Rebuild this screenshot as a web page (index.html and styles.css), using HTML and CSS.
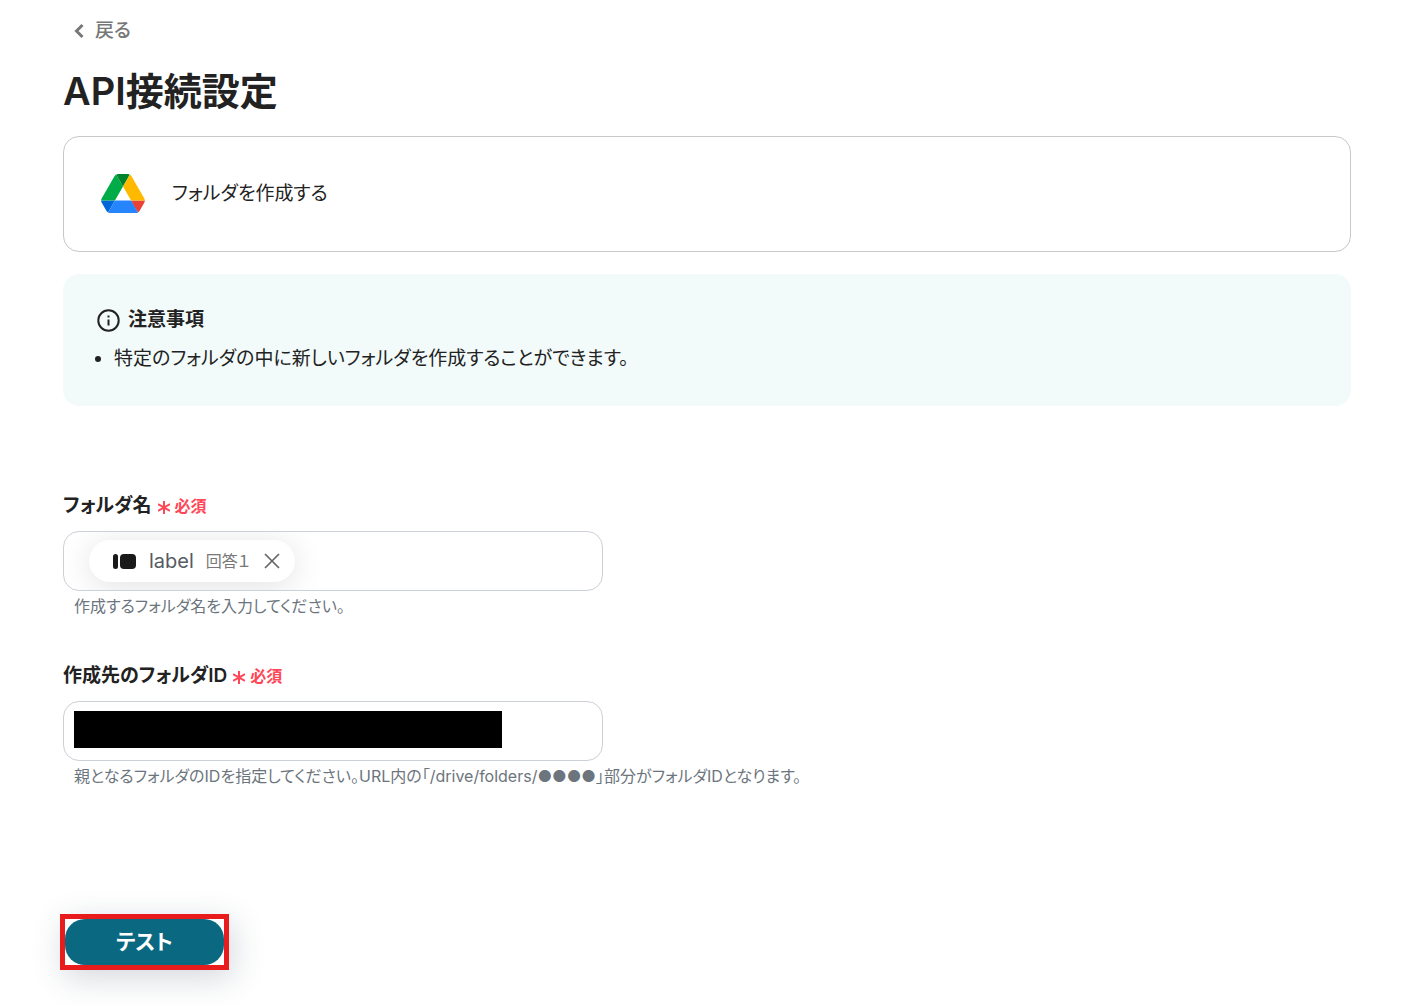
FILE: index.html
```html
<!DOCTYPE html>
<html lang="ja">
<head>
  <meta charset="UTF-8">
  <title>API接続設定</title>
  <meta name="viewport" content="width=device-width, initial-scale=1">
  <link rel="stylesheet" href="styles.css">
</head>
<body>
  <main>
    <a class="back" href="#">
      <svg width="12" height="16" viewBox="0 0 12 16" fill="none" stroke="currentColor" stroke-width="3"><path d="M9.5 2 3.5 8l6 6"/></svg>
      戻る
    </a>
    <h1>API接続設定</h1>

    <section class="action-card">
      <svg width="44" height="40" viewBox="0 0 87.3 80">
        <path fill="#0066da" d="m6.6 66.85 3.85 6.65c.8 1.4 1.95 2.5 3.3 3.3l13.75-23.8h-27.5c0 1.55.4 3.1 1.2 4.5z"/>
        <path fill="#00ac47" d="m43.65 25-13.75-23.8c-1.35.8-2.5 1.9-3.3 3.3l-25.4 44a9.06 9.06 0 0 0 -1.2 4.5h27.5z"/>
        <path fill="#ea4335" d="m73.55 76.8c1.35-.8 2.5-1.9 3.3-3.3l1.6-2.75 7.65-13.25c.8-1.4 1.2-2.95 1.2-4.5h-27.502l5.852 11.5z"/>
        <path fill="#00832d" d="m43.65 25 13.75-23.8c-1.35-.8-2.9-1.2-4.5-1.2h-18.5c-1.6 0-3.15.45-4.5 1.2z"/>
        <path fill="#2684fc" d="m59.8 53h-32.3l-13.75 23.8c1.35.8 2.9 1.2 4.5 1.2h50.8c1.6 0 3.15-.45 4.5-1.2z"/>
        <path fill="#ffba00" d="m73.4 26.5-12.7-22c-.8-1.4-1.95-2.5-3.3-3.3l-13.75 23.8 16.15 28h27.45c0-1.55-.4-3.1-1.2-4.5z"/>
      </svg>
      <p>フォルダを作成する</p>
    </section>

    <section class="notice">
      <h2>
        <svg width="24" height="24" viewBox="0 0 24 24" fill="none" stroke="currentColor" stroke-width="2"><circle cx="12.5" cy="12.5" r="10.2"/><path d="M12.5 11.5v6M12.5 7.5v2"/></svg>
        注意事項
      </h2>
      <ul>
        <li>特定のフォルダの中に新しいフォルダを作成することができます。</li>
      </ul>
    </section>

    <form class="settings">
      <div class="field">
        <label for="folderName">フォルダ名
          <span class="required"><svg width="12" height="16" viewBox="0 0 12 16" stroke="currentColor" stroke-width="2"><path d="M6 3v13M0 6.2l12 6.6M12 6.2 0 12.8"/></svg>必須</span>
        </label>
        <div class="input-box">
          <div class="tag">
            <svg width="24" height="16" viewBox="0 0 24 16" fill="#1a1a1a"><rect x="0" y="1" width="5" height="15" rx="2.5"/><rect x="7" y="1" width="16" height="15" rx="4"/></svg>
            <span class="tag-name">label</span>
            <span class="tag-value">回答１</span>
            <button type="button" aria-label="削除"><svg width="16" height="16" viewBox="0 0 16 16" fill="none" stroke="currentColor" stroke-width="1.7"><path d="M1 1l14 14M15 1 1 15"/></svg></button>
          </div>
          <input type="text" id="folderName">
        </div>
        <p class="help">作成するフォルダ名を入力してください。</p>
      </div>

      <div class="field">
        <label for="folderId">作成先のフォルダID
          <span class="required"><svg width="12" height="16" viewBox="0 0 12 16" stroke="currentColor" stroke-width="2"><path d="M6 3v13M0 6.2l12 6.6M12 6.2 0 12.8"/></svg>必須</span>
        </label>
        <div class="input-box">
          <input type="text" id="folderId">
          <span class="mask"></span>
        </div>
        <p class="help">親となるフォルダのIDを指定してください。URL内の「/drive/folders/●●●●」部分がフォルダIDとなります。</p>
      </div>

      <div class="highlight">
        <button type="submit" class="test-button">テスト</button>
      </div>
    </form>
  </main>
</body>
</html>
```

FILE: styles.css
```css
* {
  box-sizing: border-box;
}
body {
  margin: 0;
  background: #fff;
  color: #222;
  font-family: Inter, "Noto Sans CJK JP", sans-serif;
  font-size: 19px;
  line-height: 28px;
  font-feature-settings: "palt";
}
h1, h2, p, ul {
  margin: 0;
}
button, input {
  font: inherit;
  font-feature-settings: inherit;
}
main {
  padding: 17px 69px 36px 63px;
}
.back {
  display: flex;
  align-items: center;
  gap: 10px;
  width: fit-content;
  margin-left: 10px;
  color: #777;
  font-weight: 500;
  text-decoration: none;
}
h1 {
  margin-top: 18px;
  font-size: 38px;
  line-height: 56px;
  font-weight: 600;
}
.action-card {
  display: flex;
  align-items: center;
  gap: 27px;
  margin-top: 17px;
  padding: 43px 37px;
  border: 1px solid #c8c8c8;
  border-radius: 16px;
}
.action-card svg {
  margin: -6px 0;
}
.notice {
  margin-top: 22px;
  padding: 32px 33px 33px;
  border-radius: 16px;
  background: #f2fbfa;
}
.notice h2 {
  display: flex;
  align-items: center;
  gap: 8px;
  font-size: 19px;
  font-weight: 600;
}
.notice ul {
  margin-top: 11px;
  padding-left: 18px;
}
.settings {
  display: flex;
  flex-direction: column;
  gap: 42px;
  margin-top: 86px;
}
.field label {
  display: flex;
  align-items: center;
  gap: 6px;
  font-weight: 600;
}
.required {
  display: flex;
  align-items: center;
  gap: 5px;
  color: #ff4757;
  font-size: 16px;
}
.input-box {
  position: relative;
  display: flex;
  align-items: center;
  max-width: 540px;
  height: 60px;
  margin-top: 11px;
  padding: 0 25px;
  border: 1px solid #ccd0d7;
  border-radius: 16px;
  overflow: hidden;
}
.input-box input {
  flex: 1;
  min-width: 0;
  border: none;
  outline: none;
  background: transparent;
}
.tag {
  display: flex;
  align-items: center;
  gap: 12px;
  height: 42px;
  padding: 0 15px 0 24px;
  border-radius: 21px;
  background: #fff;
  box-shadow: 0 4px 32px rgba(0,0,0,0.12);
  color: #555b62;
}
.tag-name {
  font-size: 20px;
}
.tag-value {
  color: #777;
  font-size: 16px;
}
.tag button {
  display: flex;
  margin-left: 2px;
  padding: 0;
  border: none;
  background: none;
  color: #666;
  cursor: pointer;
}
.mask {
  position: absolute;
  top: 9px;
  left: 10px;
  width: 428px;
  height: 37px;
  background: #000;
}
.help {
  margin-top: 3px;
  padding-left: 11px;
  color: #6c757d;
  font-size: 16px;
  line-height: 25px;
}
.highlight {
  width: fit-content;
  margin: 83px 0 0 -3px;
  border: 5px solid #e81c1c;
  box-shadow: 4px 8px 32px rgba(40,60,80,0.2);
}
.field + .field {
  margin-top: 1px;
}
.test-button {
  display: block;
  width: 159px;
  height: 46px;
  border: none;
  border-radius: 20px;
  background: #0b6881;
  color: #fff;
  font-size: 21px;
  font-weight: 700;
  cursor: pointer;
}
```
